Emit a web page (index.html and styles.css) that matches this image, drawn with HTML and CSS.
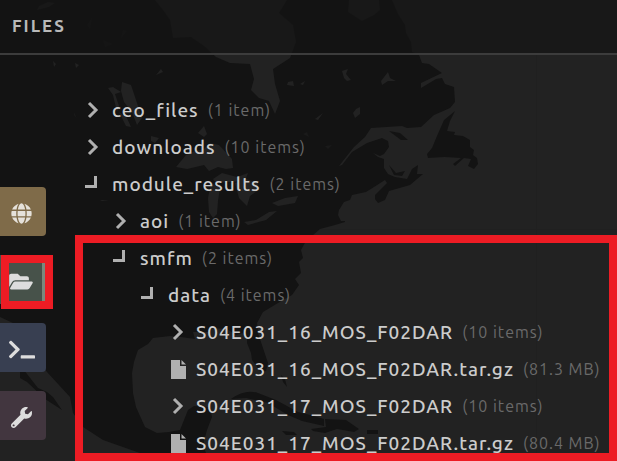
FILE: index.html
```html
<!DOCTYPE html>
<html lang="en">
<head>
<meta charset="utf-8">
<meta name="viewport" content="width=device-width, initial-scale=1">
<title>Files</title>
<link rel="stylesheet" href="styles.css">
</head>
<body>
<svg class="map" viewBox="0 0 617 461" preserveAspectRatio="xMinYMin slice" aria-hidden="true">
  <path class="land" d="M0 0H392L398 14 405 25 406 33 411 42 412 52 419 55 422 63 429 64 442 73 421 83V88L436 79 442 78 445 84 454 87 455 102 450 108 441 112 434 115 421 127 407 128 402 126 371 128 365 137 354 147 339 166 342 165 352 152 367 143 382 138 388 141 389 147 384 154 380 156 373 153 378 157 384 159V168L388 174 395 177 407 179 412 169 418 165 417 174 423 174 410 185 389 191 385 200 378 203 375 199V195L387 183 385 180 374 187 366 192 352 195 350 200 344 202 339 210 338 215 341 221H345V222L335 225 320 229 312 236 306 241 301 250 303 258 299 262 301 273 295 279 299 285 292 295 283 300 263 312 257 323 258 333 262 345 268 363 266 371 261 372 252 360 251 353 247 343 247 336 243 333 236 335 227 329 213 328 208 332 193 332 195 339 181 337 170 336 153 338 148 344 138 350 134 362 132 373 133 393 136 407 145 427 157 433 169 432 180 430 188 410 194 406 210 407 212 417 207 430 203 445 209 461H163L137 452 103 440 83 427 73 413 70 397 47 372 13 323 0 317Z"/>
  <path class="land" d="M20 365L38 388 47 392 53 397 62 410 45 399 27 382 20 378Z"/>
  <path class="land" d="M455 111L450 121 447 131 455 132 454 135 463 136 470 140V147L474 150 473 155 477 158 478 164 474 169 468 166 471 159 464 158 455 166 453 164 461 158 445 157 428 158 427 154 432 148 437 136 444 120Z"/>
  <path class="land" d="M389 131L400 133 408 140 401 140ZM389 165L396 173 405 171 402 176 394 175ZM231 399Q245 389 258 393L276 400 298 412 310 415 324 419V426L302 421 288 415 268 403 246 398ZM325 419L346 420 359 429 354 432 337 429 325 433 313 431 311 429 326 427ZM282 431L294 432 297 435 286 435ZM367 430H378V434H367ZM281 375L285 379 287 387 283 382Z"/>
  <path class="water" d="M155 0H287L279 13 293 25 296 42 290 58 273 69 275 84 280 101 275 114 269 101 259 98 251 90 254 79 250 64 230 63 216 57 204 46 191 37 173 38 170 20 163 10Z"/>
  <path class="water" d="M349 0L348 12 362 21 374 15 380 10 379 0ZM48 2L55 3 49 7 37 10 39 6ZM122 82L131 85 142 118 137 125 132 112 124 102 121 91ZM108 88L113 87 121 92 115 94 119 106 117 112 113 95ZM119 112L127 118 131 127 126 126ZM161 69L163 72 156 75ZM204 126L207 134 204 137 198 133ZM176 167L186 155 195 151 204 149 210 143 219 145 232 159 233 168 226 169 218 167 209 171 204 165 187 169ZM213 179L222 173 237 177 248 173 245 181 229 182 216 183ZM211 183L220 188 218 201 217 214 213 218 209 212 208 198ZM235 183L246 179 258 183 257 191 250 196 247 206 239 198ZM244 222L256 220 269 212 277 211 266 220 248 225ZM272 203L285 198 298 196 295 203 278 206ZM151 136L159 138 155 143 151 141ZM100 200L109 200 102 201ZM53 61L56 64 54 67ZM75 63L79 65 76 68ZM342 71L348 69 346 74 351 80 347 81 344 78ZM388 72L390 78 396 81 388 81 382 85 381 81ZM288 82L293 81 294 86 287 85ZM305 81L303 85 300 84ZM356 109L360 107V114L355 118 353 113ZM315 119L323 113 318 120Z"/>
  <path class="faint" d="M87 25L92 18 90 29ZM123 30L127 31 121 38ZM103 40L113 44 105 47ZM332 85L328 87ZM74 112L77 119 74 115ZM303 134L309 137 307 132ZM325 146L332 145 328 149Z"/>
  <path class="seam" d="M536.500 55V461M320 229.500H617"/>
</svg>

<div class="app">
  <header class="header"><h1 class="title">FILES</h1></header>
  <div class="workspace">
    <nav class="tabs" aria-label="Panels">
      <button class="tab tab-map" type="button" aria-label="Map"><svg class="icon" viewBox="0 0 496 512"><path d="M336.500 160C322 70.700 287.800 8 248 8s-74 62.700-88.500 152h177zM152 256c0 22.200 1.200 43.500 3.300 64h185.300c2.100-20.500 3.300-41.800 3.300-64s-1.200-43.500-3.300-64H155.300c-2.100 20.500-3.300 41.800-3.300 64zm324.700-96c-28.600-67.900-86.500-120.400-158-141.600 24.400 33.800 41.200 84.700 50 141.600h108zM177.200 18.400C105.800 39.600 47.800 92.100 19.300 160h108c8.700-56.900 25.500-107.800 49.900-141.600zM487.400 192H372.700c2.100 21 3.300 42.500 3.300 64s-1.200 43-3.300 64h114.600c5.500-20.500 8.600-41.800 8.600-64s-3.100-43.500-8.500-64zM120 256c0-21.500 1.200-43 3.300-64H8.600C3.200 212.500 0 233.800 0 256s3.200 43.500 8.600 64h114.600c-2-21-3.200-42.500-3.200-64zm39.500 96c14.500 89.300 48.700 152 88.500 152s74-62.700 88.500-152h-177zm159.300 141.600c71.400-21.200 129.400-73.700 158-141.600h-108c-8.800 56.900-25.600 107.800-50 141.600zM19.300 352c28.600 67.900 86.500 120.400 158 141.600-24.400-33.800-41.200-84.700-50-141.600h-108z"/></svg></button>
      <button class="tab tab-files" type="button" aria-label="Files" aria-current="page"><svg class="icon icon-wide" viewBox="0 0 576 512"><path d="M572.694 292.093L500.270 416.248A63.997 63.997 0 0 1 444.989 448H45.025c-18.523 0-30.064-20.093-20.731-36.093l72.424-124.155A64 64 0 0 1 152 256h399.964c18.523 0 30.064 20.093 20.730 36.093zM152 224h328v-48c0-26.510-21.490-48-48-48H272l-64-64H48C21.490 64 0 85.490 0 112v278.046l69.077-118.418C86.214 242.250 117.989 224 152 224z"/></svg></button>
      <button class="tab tab-terminal" type="button" aria-label="Terminal"><svg class="icon icon-wide" viewBox="0 0 640 512"><path d="M257.981 272.971L63.638 467.314c-9.373 9.373-24.569 9.373-33.941 0L7.029 444.647c-9.357-9.357-9.375-24.522-.04-33.901L161.011 256 6.990 101.255c-9.335-9.379-9.317-24.544.04-33.901l22.667-22.667c9.373-9.373 24.569-9.373 33.941 0L257.981 239.030c9.373 9.372 9.373 24.568 0 33.941zM640 456v-32c0-13.255-10.745-24-24-24H312c-13.255 0-24 10.745-24 24v32c0 13.255 10.745 24 24 24h304c13.255 0 24-10.745 24-24z"/></svg></button>
      <button class="tab tab-tools" type="button" aria-label="Tools"><svg class="icon" viewBox="0 0 512 512"><path d="M507.730 109.100c-2.240-9.030-13.540-12.090-20.120-5.510l-74.360 74.360-67.880-11.310-11.310-67.880 74.360-74.360c6.620-6.620 3.430-17.900-5.660-20.160-47.380-11.740-99.550.91-136.580 37.930-39.640 39.640-50.550 97.100-34.050 147.200L18.740 402.760c-24.990 24.990-24.990 65.510 0 90.500 24.990 24.990 65.510 24.990 90.500 0l213.210-213.210c50.120 16.710 107.470 5.680 147.370-34.220 37.070-37.070 49.700-89.320 37.910-136.730zM64 472c-13.250 0-24-10.750-24-24 0-13.260 10.750-24 24-24s24 10.740 24 24c0 13.250-10.750 24-24 24z"/></svg></button>
    </nav>
    <main class="browser">
      <ul class="tree">
        <li><button class="row" type="button" aria-expanded="false"><svg class="mark" viewBox="0 0 20 20"><path d="M7 3l7 7-7 7"/></svg><span class="name">ceo_files</span><span class="meta">(1 item)</span></button></li>
        <li><button class="row" type="button" aria-expanded="false"><svg class="mark" viewBox="0 0 20 20"><path d="M7 3l7 7-7 7"/></svg><span class="name">downloads</span><span class="meta">(10 items)</span></button></li>
        <li><button class="row" type="button" aria-expanded="true"><svg class="mark" viewBox="0 0 20 20"><path d="M13.500 2v10.500H3"/></svg><span class="name">module_results</span><span class="meta">(2 items)</span></button>
          <ul class="branch">
            <li><button class="row" type="button" aria-expanded="false"><svg class="mark" viewBox="0 0 20 20"><path d="M7 3l7 7-7 7"/></svg><span class="name">aoi</span><span class="meta">(1 item)</span></button></li>
            <li><button class="row" type="button" aria-expanded="true"><svg class="mark" viewBox="0 0 20 20"><path d="M13.500 2v10.500H3"/></svg><span class="name">smfm</span><span class="meta">(2 items)</span></button>
              <ul class="branch">
                <li><button class="row" type="button" aria-expanded="true"><svg class="mark" viewBox="0 0 20 20"><path d="M13.500 2v10.500H3"/></svg><span class="name">data</span><span class="meta">(4 items)</span></button>
                  <ul class="branch">
                    <li><button class="row" type="button" aria-expanded="false"><svg class="mark" viewBox="0 0 20 20"><path d="M8 3l7 7-7 7"/></svg><span class="name">S04E031_16_MOS_F02DAR</span><span class="meta">(10 items)</span></button></li>
                    <li><a class="row" href="#"><svg class="mark doc" viewBox="0 0 20 20"><path d="M5 1h9v6h6v13H5zM15.500 1v4.500H20z"/></svg><span class="name">S04E031_16_MOS_F02DAR.tar.gz</span><span class="meta">(81.3 MB)</span></a></li>
                    <li><button class="row" type="button" aria-expanded="false"><svg class="mark" viewBox="0 0 20 20"><path d="M8 3l7 7-7 7"/></svg><span class="name">S04E031_17_MOS_F02DAR</span><span class="meta">(10 items)</span></button></li>
                    <li><a class="row" href="#"><svg class="mark doc" viewBox="0 0 20 20"><path d="M5 1h9v6h6v13H5zM15.500 1v4.500H20z"/></svg><span class="name">S04E031_17_MOS_F02DAR.tar.gz</span><span class="meta">(80.4 MB)</span></a></li>
                  </ul>
                </li>
              </ul>
            </li>
          </ul>
        </li>
      </ul>
    </main>
  </div>
</div>
<div class="callout callout-tab"></div>
<div class="callout callout-tree"></div>
</body>
</html>
```
FILE: styles.css
```css
* { box-sizing: border-box; }

body {
  margin: 0;
  height: 100vh;
  overflow: hidden;
  position: relative;
  background: #222;
  color: #ccc;
  font-family: Ubuntu, "Noto Sans", sans-serif;
}

/* Backdrop map */
.map {
  position: absolute;
  inset: 0;
  width: 100%;
  height: 100%;
}
.land { fill: #131313; }
.water { fill: #222; }
.faint { fill: #1a1a1a; }
.seam { fill: none; stroke: #202020; }

.app {
  position: relative;
  display: flex;
  flex-direction: column;
  height: 100%;
}

.header {
  display: flex;
  align-items: center;
  flex: none;
  height: 55px;
  padding: 0 12px 2px;
  background: rgba(20, 20, 20, 0.7);
  border-bottom: 2px solid #3c3c3c;
}
.title {
  margin: 0;
  color: #b9b9b9;
  font-size: 17px;
  line-height: 24px;
  font-weight: 700;
  letter-spacing: 2px;
}

.workspace {
  display: flex;
  flex: 1;
  min-height: 0;
}

/* Panel tabs */
.tabs {
  display: flex;
  flex-direction: column;
  gap: 19px;
  flex: none;
  width: 46px;
  padding-top: 132px;
}
.tab {
  display: flex;
  align-items: center;
  justify-content: center;
  height: 49px;
  flex: none;
  padding: 4px 3px 0 0;
  border: 0;
  border-radius: 0 4px 4px 0;
  color: #ddd;
}
.tab-map { background: #7f6b49; color: #e5e1da; }
.tab-files {
  padding-right: 0;
  background: #47524a;
  border-right: 4px solid #7a897d;
  border-radius: 0;
}
.tab-terminal { background: #383f51; }
.tab-tools { background: #42363f; }
.icon {
  width: 21px;
  height: 21px;
  fill: currentColor;
}
.icon-wide {
  width: 26px;
}

/* File tree */
.browser {
  flex: 1;
  min-width: 0;
  padding: 36px 0 0 36px;
}
.tree, .branch {
  margin: 0;
  padding: 0;
  list-style: none;
}
.tree { letter-spacing: 1px; }
.branch { padding-left: 28px; }
.row {
  display: flex;
  align-items: center;
  gap: 9px;
  height: 37px;
  padding: 0;
  border: 0;
  background: none;
  color: inherit;
  font: inherit;
  letter-spacing: inherit;
  text-decoration: none;
  white-space: nowrap;
}
.mark {
  flex: none;
  width: 20px;
  height: 20px;
  margin-right: 1px;
  fill: none;
  stroke: #b0b0b0;
  stroke-width: 3;
}
.doc {
  fill: #b0b0b0;
  stroke: none;
}
.name {
  font-size: 19px;
  line-height: 24px;
  font-weight: 500;
}
.meta {
  color: #6a6a6a;
  font-size: 16px;
  line-height: 24px;
}

/* Highlight frames over the panel */
.callout {
  position: absolute;
  border: 8px solid #ed1c24;
  pointer-events: none;
}
.callout-tab {
  left: 1px;
  top: 255px;
  width: 52px;
  height: 54px;
}
.callout-tree {
  left: 75px;
  top: 235px;
  right: 0;
  bottom: 0;
}
```
